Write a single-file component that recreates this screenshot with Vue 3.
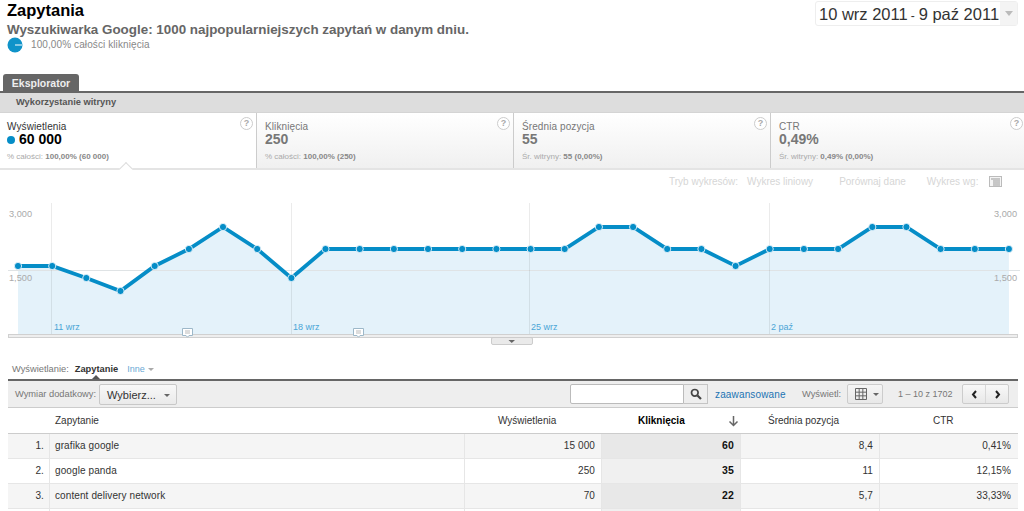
<script setup>
const ys = [266,266,278,291,266,249,227,249,278,249,249,249,249,249,249,249,249,227,227,249,249,266,249,249,249,227,227,249,249,249]
const pts = ys.map((y, i) => ({ x: +(18 + i * 34.17).toFixed(1), y }))
const line = pts.map(p => `${p.x},${p.y - 195}`).join(' ')
const area = `18,140 ${line} 1009,140`
const grid = [51, 291, 529, 769]
const dates = [{ x: 54, t: '11 wrz' }, { x: 293, t: '18 wrz' }, { x: 531, t: '25 wrz' }, { x: 771, t: '2 paź' }]
const notes = [187.5, 358.5]
const cards = [
  { label: 'Wyświetlenia', value: '60 000', pre: '% całości:', sub: '100,00% (60 000)', active: true },
  { label: 'Kliknięcia', value: '250', pre: '% całości:', sub: '100,00% (250)' },
  { label: 'Średnia pozycja', value: '55', pre: 'Śr. witryny:', sub: '55 (0,00%)' },
  { label: 'CTR', value: '0,49%', pre: 'Śr. witryny:', sub: '0,49% (0,00%)' },
]
const rows = [
  ['1.', 'grafika google', '15 000', '60', '8,4', '0,41%'],
  ['2.', 'google panda', '250', '35', '11', '12,15%'],
  ['3.', 'content delivery network', '70', '22', '5,7', '33,33%'],
]
</script>

<template>
  <div class="page">
    <header class="head">
      <div class="titles">
        <h1>Zapytania</h1>
        <h2>Wyszukiwarka Google: 1000 najpopularniejszych zapytań w danym dniu.</h2>
        <div class="share">
          <svg width="16" height="16" viewBox="0 0 16 16"><circle cx="8" cy="8" r="7.5" fill="#0f93c9"/><path d="M8 8h7" stroke="#fff" stroke-width="1"/></svg>
          <span>100,00% całości kliknięcia</span>
        </div>
      </div>
      <div class="date">
        <span class="date-text">10 wrz 2011<i>-</i>9 paź 2011</span>
        <span class="date-arrow"><b></b></span>
      </div>
    </header>

    <div class="tab">Eksplorator</div>
    <div class="band"><span>Wykorzystanie witryny</span></div>

    <section class="cards">
      <div v-for="c in cards" :key="c.label" class="card" :class="{ active: c.active }">
        <span class="help">?</span>
        <div class="c-label">{{ c.label }}</div>
        <div class="c-value"><b v-if="c.active" class="dot"></b>{{ c.value }}</div>
        <div class="c-sub">{{ c.pre }} <strong>{{ c.sub }}</strong></div>
        <span v-if="c.active" class="notch"></span>
      </div>
    </section>

    <div class="controls">
      <span>Tryb wykresów:</span>
      <span class="m1">Wykres liniowy</span>
      <span class="m2">Porównaj dane</span>
      <span class="m3">Wykres wg:</span>
      <svg class="m4" width="13" height="11" viewBox="0 0 13 11"><rect x=".5" y=".5" width="12" height="10" fill="#f4f4f4" stroke="#bbb"/><path d="M2 3h9M4 5h7M4 7h7M4 9h7" stroke="#999"/></svg>
    </div>

    <svg class="chart" width="1024" height="154" viewBox="0 0 1024 154">
      <polygon :points="area" fill="#e4f2fa"/>
      <line x1="8" x2="1020" y1="75.5" y2="75.5" stroke="#dfe3e5"/>
      <line v-for="g in grid" :key="g" :x1="g + .5" :x2="g + .5" y1="8" y2="140" stroke="#000" stroke-opacity=".08"/>
      <polyline :points="line" fill="none" stroke="#058dc7" stroke-width="3.8"/>
      <circle v-for="p in pts" :key="p.x" :cx="p.x" :cy="p.y - 195" r="3.6" fill="#058dc7" stroke="#e4f2fa" stroke-width=".9"/>
      <text x="9" y="22" class="ax">3,000</text>
      <text x="9" y="86" class="ax">1,500</text>
      <text x="1017" y="22" class="ax" text-anchor="end">3,000</text>
      <text x="1017" y="86" class="ax" text-anchor="end">1,500</text>
      <text v-for="d in dates" :key="d.t" :x="d.x" y="135" class="dt">{{ d.t }}</text>
      <rect x="8.5" y="139.5" width="1009" height="3" fill="#eee" stroke="#d0d0d0"/>
      <g v-for="n in notes" :key="n">
        <path :d="`M${n - 5} 133.5h10v7h-3.500l-1.500 1.700-1.500-1.700h-3.500z`" fill="#fff" stroke="#9db8c9"/>
        <path :d="`M${n - 2.500} 136h5M${n - 2.500} 138h5`" stroke="#aaa" stroke-width=".8"/>
      </g>
      <rect x="491.500" y="142.500" width="41" height="7" rx="1.500" fill="#eaeaea" stroke="#ccc"/>
      <path d="M508.500 145h6.500l-3.250 3z" fill="#666"/>
    </svg>

    <div class="view">
      <span>Wyświetlanie:</span>
      <strong>Zapytanie</strong>
      <em>Inne</em><b class="tri"></b>
      <span class="up"></span>
    </div>

    <section class="table">
      <div class="toolbar">
        <span class="tl">Wymiar dodatkowy:</span>
        <span class="select">Wybierz... <b class="tri dark"></b></span>
        <div class="spacer"></div>
        <div class="search">
          <span class="input"></span>
          <span class="lens">
            <svg width="12" height="12" viewBox="0 0 12 12"><circle cx="4.800" cy="4.800" r="3.300" fill="none" stroke="#444" stroke-width="1.700"/><path d="M7.500 7.500l3.500 3.500" stroke="#444" stroke-width="2.200"/></svg>
          </span>
        </div>
        <a class="adv">zaawansowane</a>
        <span class="tl show">Wyświetl:</span>
        <span class="gridbtn">
          <svg width="12" height="12" viewBox="0 0 12 12"><path d="M.5.500h11v11H.500zM4.170.500v11M7.830.500v11M.500 4.170h11M.500 7.830h11" fill="none" stroke="#666"/></svg>
          <b class="tri dark"></b>
        </span>
        <span class="tl count">1 – 10 z 1702</span>
        <span class="pager">
          <span><svg width="7" height="9" viewBox="0 0 7 9"><path d="M5 1L2 4.500 5 8" fill="none" stroke="#222" stroke-width="2"/></svg></span>
          <span><svg width="7" height="9" viewBox="0 0 7 9"><path d="M2 1l3 3.500L2 8" fill="none" stroke="#222" stroke-width="2"/></svg></span>
        </span>
      </div>

      <div class="tr th">
        <div></div>
        <div class="q">Zapytanie</div>
        <div class="imp">Wyświetlenia</div>
        <div class="clicks">
          <strong>Kliknięcia</strong>
          <svg width="11" height="12" viewBox="0 0 11 12"><path d="M5.500 1v9M1.500 6.500l4 4 4-4" fill="none" stroke="#666" stroke-width="1.500"/></svg>
        </div>
        <div class="avg">Średnia pozycja</div>
        <div class="ctr">CTR</div>
      </div>
      <div v-for="(r, i) in rows" :key="r[0]" class="tr row" :class="{ odd: i % 2 === 0 }">
        <div class="num">{{ r[0] }}</div>
        <div class="q2">{{ r[1] }}</div>
        <div class="n">{{ r[2] }}</div>
        <div class="n sel">{{ r[3] }}</div>
        <div class="n">{{ r[4] }}</div>
        <div class="n">{{ r[5] }}</div>
      </div>
      <div class="tr row last">
        <div></div><div></div><div></div><div class="sel"></div><div></div><div></div>
      </div>
    </section>
  </div>
</template>

<style scoped>
.page { width: 1024px; height: 511px; overflow: hidden; font-family: "Liberation Sans", Arial, sans-serif; color: #333; background: #fff; }
.head { display: flex; justify-content: space-between; height: 74px; padding: 0 6px 0 7px; box-sizing: border-box; }
h1 { margin: 0; font-size: 16.500px; line-height: 21px; font-weight: bold; color: #000; }
h2 { margin: 0; font-size: 13.400px; line-height: 17px; font-weight: bold; color: #666; }
.share { display: flex; align-items: center; gap: 8px; font-size: 10px; line-height: 16px; color: #888; letter-spacing: .1px; margin-top: -1px; }
.date { display: flex; align-self: flex-start; width: 203px; height: 25px; margin-top: 1px; box-sizing: border-box; border: 1px solid #eee; border-radius: 3px; }
.date-text { flex: 1; font-size: 16.500px; line-height: 24px; color: #333; padding-left: 3px; white-space: nowrap; }
.date-text i { font-style: normal; font-size: 12px; margin: 0 4px 0 3px; }
.date-arrow { width: 17px; background: #f4f4f4; display: flex; align-items: center; justify-content: center; }
.date-arrow b { border: 4.500px solid transparent; border-top: 5px solid #bbb; border-bottom: 0; }
.tab { margin-left: 3px; width: 76px; height: 17px; box-sizing: border-box; background: #666; color: #eee; font-size: 10.500px; font-weight: bold; line-height: 18px; text-align: center; border-radius: 3px 3px 0 0; }
.band { height: 22px; box-sizing: border-box; border-top: 2px solid #666; background: #ddd; padding-left: 16px; font-size: 9.300px; font-weight: bold; line-height: 19px; color: #555; border-bottom: 1px solid #d4d4d4; }
.cards { display: grid; grid-template-columns: 257px 257px 257px 253px; height: 55px; border-bottom: 2px solid #e4e4e4; box-sizing: content-box; }
.card { position: relative; padding: 7px 0 0 8px; box-sizing: border-box; background: linear-gradient(#fff, #f0f0f0); border-right: 1px solid #ccc; color: #777; }
.card:last-child { border-right: 0; }
.card.active { background: #fff; padding-left: 7px; color: #333; }
.help { position: absolute; right: 3px; top: 4px; width: 11px; height: 11px; border: 1px solid #ccc; border-radius: 50%; font-size: 9px; line-height: 11px; text-align: center; color: #aaa; font-weight: bold; background: #fff; }
.card:last-child .help { right: 1px; }
.c-label { font-size: 10px; line-height: 13px; letter-spacing: .1px; }
.c-value { margin-top: -1px; font-size: 14px; line-height: 15px; font-weight: bold; display: flex; align-items: center; }
.active .c-value { color: #000; }
.dot { width: 8px; height: 8px; border-radius: 50%; background: #058dc7; margin-right: 4px; }
.c-sub { font-size: 8px; line-height: 12px; margin-top: 4px; color: #aaa; }
.c-sub strong { color: #888; }
.notch { position: absolute; left: 121px; bottom: -2px; width: 9px; height: 9px; background: #fff; border-left: 1px solid #ddd; border-top: 1px solid #ddd; transform: translateY(4px) rotate(45deg); }
.controls { height: 25px; box-sizing: border-box; padding: 6px 0 0 669px; display: flex; align-items: flex-start; font-size: 10px; line-height: 12px; color: #d6d6d6; }
.m1 { margin-left: 9px; }
.m2 { margin-left: 26px; }
.m3 { margin-left: 21px; }
.m4 { margin-left: 11px; }
.chart { display: block; }
.ax { font: 9.200px "Liberation Sans", Arial, sans-serif; fill: #aaa; }
.dt { font: 9px "Liberation Sans", Arial, sans-serif; fill: #4aa5d6; }
.view { position: relative; height: 30px; padding: 14px 0 0 12px; box-sizing: border-box; display: flex; align-items: flex-start; font-size: 9.300px; line-height: 12px; color: #777; }
.view strong { margin-left: 6px; color: #333; }
.view em { margin-left: 9px; font-style: normal; color: #6aa9d5; font-size: 9px; }
.tri { display: inline-block; border: 3px solid transparent; border-top: 3.500px solid #aaa; border-bottom: 0; margin: 5px 0 0 3px; }
.tri.dark { border-top-color: #666; }
.up { position: absolute; left: 92px; bottom: 0; border: 4px solid transparent; border-bottom: 4px solid #555; border-top: 0; }
.table { margin: 0 6px 0 8px; border-top: 2px solid #666; }
.toolbar { height: 27px; box-sizing: border-box; background: #eee; border-bottom: 1px solid #ccc; display: flex; align-items: center; padding: 0 9px 0 7px; }
.tl { font-size: 9.300px; color: #777; white-space: nowrap; }
.select { margin-left: 3px; width: 78px; height: 21px; box-sizing: border-box; border: 1px solid #c8c8c8; border-radius: 2px; background: linear-gradient(#f8f8f8, #eaeaea); font-size: 11px; line-height: 20px; padding-left: 7px; color: #333; white-space: nowrap; }
.select .tri { margin-left: 5px; vertical-align: middle; margin-top: 0; }
.spacer { flex: 1; }
.search { display: flex; height: 20px; }
.input { width: 114px; box-sizing: border-box; background: #fff; border: 1px solid #bbb; border-radius: 2px 0 0 2px; }
.lens { width: 24px; box-sizing: border-box; border: 1px solid #c4c4c4; border-left: 0; background: #eee; display: flex; align-items: center; justify-content: center; }
.adv { margin-left: 7px; width: 70px; font-size: 10px; letter-spacing: .15px; color: #1c74b3; white-space: nowrap; }
.show { margin-left: 17px; width: 39px; }
.gridbtn { margin-left: 6px; width: 36px; height: 20px; box-sizing: border-box; border: 1px solid #ccc; border-radius: 2px; background: linear-gradient(#f5f5f5, #e8e8e8); display: flex; align-items: center; padding-left: 7px; gap: 6px; }
.gridbtn .tri { margin: 0; }
.count { margin-left: 15px; width: 55px; font-size: 9px; }
.pager { margin-left: 9px; display: flex; width: 47px; height: 20px; box-sizing: border-box; border: 1px solid #ccc; border-radius: 2px; background: linear-gradient(#f8f8f8, #e8e8e8); }
.pager span { flex: 1; display: flex; align-items: center; justify-content: center; }
.pager span + span { border-left: 1px solid #d8d8d8; }
.tr { display: grid; grid-template-columns: 41px 415px 137px 139px 139px 139px; }
.th { height: 25px; border-bottom: 1px solid #ccc; font-size: 10px; line-height: 25px; color: #333; background: #fff; }
.q { padding-left: 6px; }
.imp { padding-left: 34px; }
.avg { padding-left: 28px; }
.ctr { padding-left: 54px; }
.clicks { display: flex; align-items: center; justify-content: space-between; padding: 0 1px 0 37px; box-sizing: border-box; color: #000; }
.clicks strong { font-size: 10px; }
.row { height: 25px; box-sizing: border-box; border-bottom: 1px solid #e6e6e6; font-size: 10px; line-height: 24px; color: #333; letter-spacing: .1px; }
.row.odd { background: #f5f5f5; }
.row > div + div { border-left: 1px solid #e6e6e6; }
.num { text-align: right; padding-right: 5px; }
.q2 { padding-left: 5px; }
.n { text-align: right; padding-right: 6px; }
.n:last-child { padding-right: 7px; }
.row .sel { background: #f0f0f0; font-weight: bold; color: #111; font-size: 10.500px; line-height: 23px; }
.row.odd .sel { background: #e8e8e8; }
</style>
